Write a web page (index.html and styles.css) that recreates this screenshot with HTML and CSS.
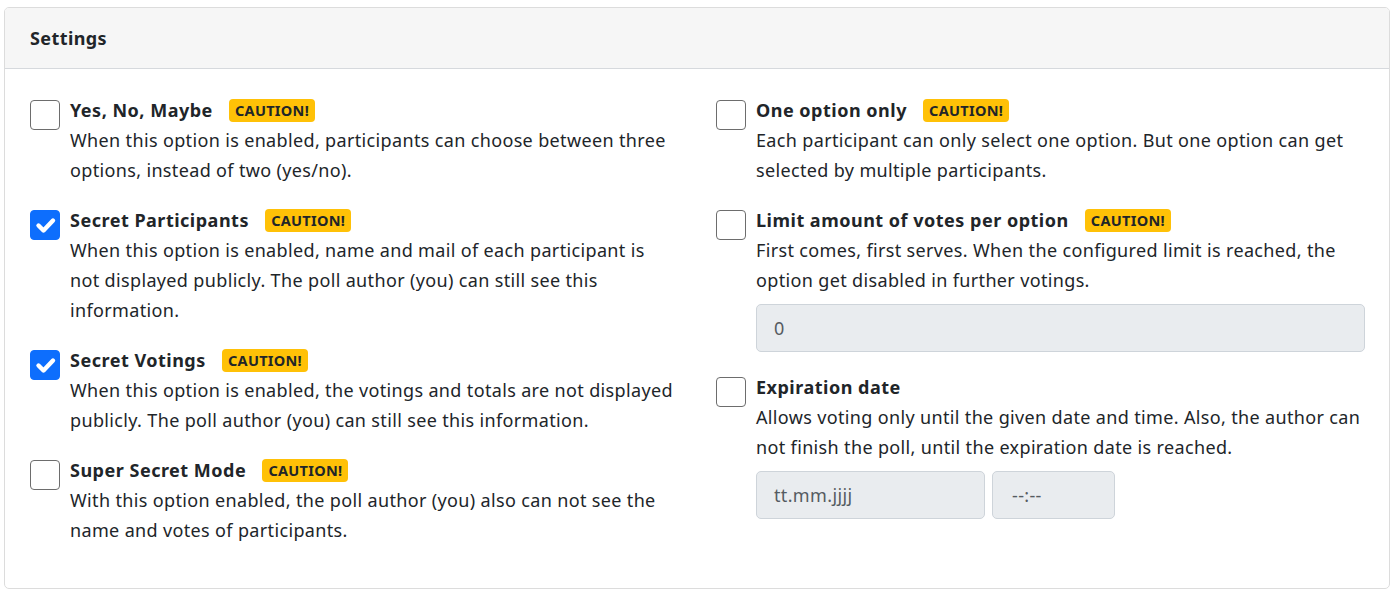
FILE: index.html
```html
<!DOCTYPE html>
<html lang="en">
<head>
<meta charset="utf-8">
<title>Settings</title>
<link rel="stylesheet" href="styles.css">
</head>
<body>
<div class="card">
  <div class="card-header">Settings</div>
  <div class="card-body">
    <div class="col">
      <div class="opt">
        <span class="box"></span>
        <div class="txt">
          <div class="title">Yes, No, Maybe <span class="badge">CAUTION!</span></div>
          <div class="desc">When this option is enabled, participants can choose between three options, instead of two (yes/no).</div>
        </div>
      </div>
      <div class="opt">
        <span class="box checked"><svg viewBox="0 0 30 30"><path d="M8.5 15.5l5 5l9.5-10" fill="none" stroke="#fff" stroke-width="4.4" stroke-linecap="round" stroke-linejoin="round"/></svg></span>
        <div class="txt">
          <div class="title">Secret Participants <span class="badge">CAUTION!</span></div>
          <div class="desc">When this option is enabled, name and mail of each participant is not displayed publicly. The poll author (you) can still see this information.</div>
        </div>
      </div>
      <div class="opt">
        <span class="box checked"><svg viewBox="0 0 30 30"><path d="M8.5 15.5l5 5l9.5-10" fill="none" stroke="#fff" stroke-width="4.4" stroke-linecap="round" stroke-linejoin="round"/></svg></span>
        <div class="txt">
          <div class="title">Secret Votings <span class="badge">CAUTION!</span></div>
          <div class="desc">When this option is enabled, the votings and totals are not displayed publicly. The poll author (you) can still see this information.</div>
        </div>
      </div>
      <div class="opt">
        <span class="box"></span>
        <div class="txt">
          <div class="title">Super Secret Mode <span class="badge">CAUTION!</span></div>
          <div class="desc">With this option enabled, the poll author (you) also can not see the name and votes of participants.</div>
        </div>
      </div>
    </div>
    <div class="col">
      <div class="opt">
        <span class="box"></span>
        <div class="txt">
          <div class="title">One option only <span class="badge">CAUTION!</span></div>
          <div class="desc">Each participant can only select one option. But one option can get selected by multiple participants.</div>
        </div>
      </div>
      <div class="opt">
        <span class="box"></span>
        <div class="txt">
          <div class="title">Limit amount of votes per option <span class="badge">CAUTION!</span></div>
          <div class="desc">First comes, first serves. When the configured limit is reached, the option get disabled in further votings.</div>
          <div class="field wide">0</div>
        </div>
      </div>
      <div class="opt">
        <span class="box"></span>
        <div class="txt">
          <div class="title">Expiration date</div>
          <div class="desc">Allows voting only until the given date and time. Also, the author can not finish the poll, until the expiration date is reached.</div>
          <div class="fields">
            <div class="field date">tt.mm.jjjj</div>
            <div class="field time">--:--</div>
          </div>
        </div>
      </div>
    </div>
  </div>
</div>
</body>
</html>
```
FILE: styles.css
```css
html, body { margin: 0; padding: 0; background: #fff; }
body {
  font-family: "Noto Sans", "Open Sans", sans-serif;
  font-size: 18px;
  letter-spacing: 0.35px;
  color: #212529;
  padding: 7px 3px 0 4px;
}
.card {
  border: 1px solid #dcdcdc;
  border-radius: 5px;
  height: 582px;
  box-sizing: border-box;
  overflow: hidden;
}
.card-header {
  background: #f6f6f6;
  border-bottom: 1px solid #d6d9dd;
  height: 60px;
  display: flex;
  align-items: center;
  padding-left: 25px;
  font-weight: 700;
  font-size: 18px;
  letter-spacing: 0.4px;
}
.card-body {
  display: grid;
  grid-template-columns: 649px 649px;
  column-gap: 37px;
  padding: 26px 25px 0 25px;
}
.opt {
  display: flex;
  gap: 10px;
  margin-bottom: 20px;
}
.box {
  flex: none;
  box-sizing: border-box;
  width: 30px;
  height: 30px;
  margin-top: 5px;
  border: 1px solid #6d6d6d;
  border-radius: 4px;
  display: flex;
  align-items: center;
  justify-content: center;
}
.box.checked { background: #0d6efd; border-color: #0d6efd; }
.box svg { width: 30px; height: 30px; flex: none; }
.txt { flex: 1; min-width: 0; }
.title { font-weight: 700; line-height: 30px; letter-spacing: 0.5px; }
.badge {
  display: inline-block;
  background: #ffc107;
  color: #212529;
  font-size: 14.5px;
  font-weight: 700;
  letter-spacing: 0.3px;
  line-height: 15px;
  padding: 4px 6px;
  border-radius: 4px;
  margin-left: 11px;
  vertical-align: 1px;
}
.desc { line-height: 30px; }
.field {
  box-sizing: border-box;
  height: 48px;
  background: #e9ecef;
  border: 1px solid #ced4da;
  border-radius: 5px;
  color: #555b61;
  display: flex;
  align-items: center;
  padding-left: 17px;
}
.field.wide { margin-top: 9px; }
.fields { display: flex; gap: 7px; margin-top: 9px; }
.field.date { width: 229px; }
.field.time { width: 123px; padding-left: 19px; }
```
